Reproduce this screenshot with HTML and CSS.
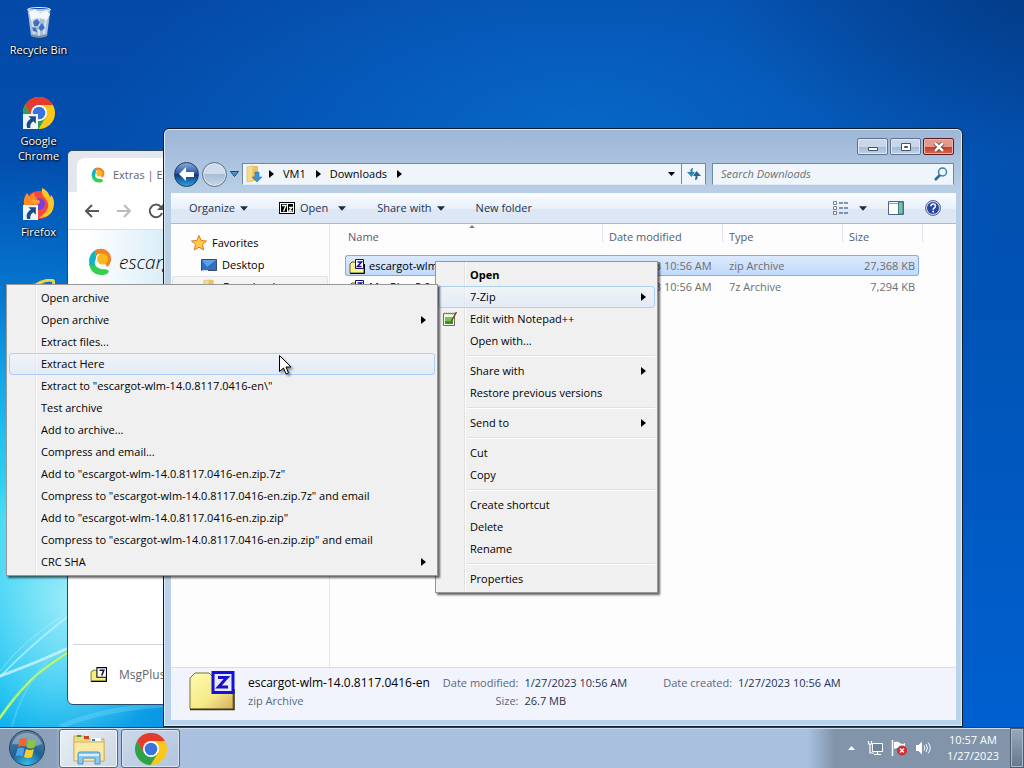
FILE: index.html
```html
<!DOCTYPE html>
<html lang="en">
<head>
  <meta charset="UTF-8">
  <title>Desktop</title>
  <link rel="stylesheet" href="styles.css">
</head>
<body>

  <!-- Shared icons -->
  <svg class="defs" aria-hidden="true">
    <symbol id="chrome" viewBox="0 0 32 32">
      <circle cx="16" cy="16" r="16" fill="#fbc819"/>
      <path d="M2.1 8 A16 16 0 0 0 15.5 32 L23 20 L16 16 L9 19.5 Z" fill="#2da14c"/>
      <path d="M2.1 8 L9.1 20 L12 10 L16 8 L29.9 8 A16 16 0 0 0 2.1 8Z" fill="#e33b2e"/>
      <circle cx="16" cy="16" r="8" fill="#fff"/>
      <circle cx="16" cy="16" r="6.3" fill="#3873e0"/>
    </symbol>
    <symbol id="shortcut" viewBox="0 0 14 14">
      <path d="M0 0h14v14H0z" fill="#eef4fa"/>
      <path d="M5 2h7v7l-2.300-2.300C7.500 8 6.500 10 6.800 13H4C2.500 9.500 4 6.500 7.300 4.300z" fill="#1c4c86"/>
    </symbol>
    <symbol id="escargot" viewBox="0 0 24 28">
      <path d="M10 1Q1 4 1 14q0 4 2 7l8-3q-4-4-3-9 1-3 3-4z" fill="#12b3c4"/>
      <path d="M7 3q5-4 11-1 6 4 5 11-1 4-4 6l-2-4q3-5-1-8-5-3-9 1z" fill="#f08322"/>
      <circle cx="14.500" cy="11" r="5.500" fill="#fbb81c"/>
      <path d="M1 14q1 4 5 4h5q3 0 5 2l5 3q-1 4-7 4Q2 27 1 14z" fill="#35cf4e"/>
      <path d="M8 11q0 7 9 7l2 3q-9 1-12-4-1-3 1-6z" fill="#fff"/>
    </symbol>
    <symbol id="zip-file" viewBox="0 0 16 16">
      <path d="M1 6l2-2h4l1 2h7v9H1z" fill="#fbf68c" stroke="#5a5a28"/>
      <path d="M1 15.500h14.500V6" fill="none" stroke="#000"/>
      <path d="M6.500 1.500h8v9h-8z" fill="#fff" stroke="#101070"/>
      <path d="M8.500 4h4l-4 4.500h4" fill="none" stroke="#1010a0" stroke-width="1.500"/>
    </symbol>
    <symbol id="folder" viewBox="0 0 18 18">
      <path d="M2 2l6-1v15l-6 1z" fill="#f6dd85" stroke="#c9a646" stroke-width=".5"/>
      <path d="M8 1h5v15H8z" fill="#e9c45e"/>
      <path d="M10 7h4v5h3l-5 5-5-5h3z" fill="#3f92d8" stroke="#1d68ad" stroke-width=".5"/>
    </symbol>
    <symbol id="right" viewBox="0 0 5 8"><path d="M0 0l5 4-5 4z"/></symbol>
    <symbol id="down" viewBox="0 0 9 5"><path d="M0 0h9L4.500 5z"/></symbol>
  </svg>

  <main class="desktop">
    <svg class="streaks" viewBox="0 0 164 200" aria-hidden="true">
      <path d="M0 149Q36 136 66 122T120 92" stroke="#d5f6ff" stroke-width="3" opacity=".75"/>
      <path d="M0 150Q30 118 80 80" stroke="#d0f6ff" stroke-width="2" opacity=".6"/>
      <path d="M0 144Q24 112 70 84" stroke="#bdf3ff" stroke-width="1" opacity=".5"/>
      <path d="M-1 192Q14 170 30 154T90 112" stroke="#8fec6a" stroke-width="3"/>
      <path d="M-1 192Q14 170 30 154T90 112" stroke="#e0ffb0" stroke-width="1"/>
      <path d="M12 200Q20 165 50 130" stroke="#8fe4ff" stroke-width="2" opacity=".3"/>
      <path d="M60 200Q100 182 164 178" stroke="#9be9ff" stroke-width="5" opacity=".25"/>
    </svg>

    <div class="shortcuts">
      <a class="shortcut" href="#">
        <svg viewBox="0 0 32 32" aria-hidden="true">
          <path d="M4.500 3L8 30q8 3 16 0l3.500-27z" fill="#b9cbdc" opacity=".9"/>
          <path d="M8 5l3 23M24 5l-3 23M16 5v25" stroke="#e8f1f8" stroke-width="2" opacity=".7"/>
          <path d="M6 6l6-3 5 4 6-3 4 4-3 6-8-2-8 2z" fill="#f4f8fb"/>
          <path d="M10 16l4-3 3 3-2 4h-4zM15 22l4-5 3 5-4 3zM9 21l4 1 1 4-4-1z" fill="#3c72c4"/>
          <ellipse cx="16" cy="3.500" rx="11.500" ry="2" fill="none" stroke="#e3edf5"/>
          <path d="M8 29q8 3 16 0" stroke="#7d8e9e" fill="none" stroke-width="1.500"/>
        </svg>
        <span>Recycle Bin</span>
      </a>
      <a class="shortcut" href="#">
        <svg viewBox="0 0 32 32" aria-hidden="true"><use href="#chrome"/><use href="#shortcut" x="0" y="17" width="15" height="15"/></svg>
        <span>Google Chrome</span>
      </a>
      <a class="shortcut" href="#">
        <svg viewBox="0 0 32 32" aria-hidden="true">
          <circle cx="16" cy="17" r="14" fill="#f5483f"/>
          <path d="M1 17Q0 10 4 5l3 4q2-4 4-4l1 4 5 2-3 6-7 5z" fill="#ff8a22"/>
          <path d="M19 0q-1 6 3 10 6 6 1 14l-7 6q15-1 15-15 0-5-3-8l-1 3Q26 3 19 0z" fill="#ffc62c"/>
          <circle cx="16" cy="16" r="6" fill="#7a3fd6"/>
          <path d="M8 12q8-2 9 2-1 3-6 3z" fill="#ffa02c"/>
          <use href="#shortcut" x="0" y="17" width="15" height="15"/>
        </svg>
        <span>Firefox</span>
      </a>
      <a class="shortcut" href="#">
        <svg viewBox="0 0 32 32" aria-hidden="true">
          <circle cx="16" cy="17" r="11" fill="none" stroke="#2f9fe6" stroke-width="5"/>
          <path d="M3 18Q12 1 29 1q4 2-1 9" fill="none" stroke="#f3d53a" stroke-width="3"/>
        </svg>
        <span>Internet Explorer</span>
      </a>
    </div>

    <!-- Browser window behind the explorer -->
    <section class="browser">
      <div class="tabs">
        <div class="tab"><svg width="14" height="16" aria-hidden="true"><use href="#escargot"/></svg>Extras | Escargot</div>
      </div>
      <div class="browser-bar">
        <button aria-label="Back"><svg width="16" height="16" viewBox="0 0 16 16"><path d="M15 8H2M8 2L2 8l6 6" fill="none" stroke="#54575b" stroke-width="2"/></svg></button>
        <button aria-label="Forward"><svg width="16" height="16" viewBox="0 0 16 16"><path d="M1 8h13M8 2l6 6-6 6" fill="none" stroke="#b9bbbd" stroke-width="2"/></svg></button>
        <button aria-label="Reload"><svg width="16" height="16" viewBox="0 0 16 16"><path d="M13 4a6.300 6.300 0 1 0 1 6" fill="none" stroke="#54575b" stroke-width="2"/><path d="M15 1v6H9z" fill="#54575b"/></svg></button>
      </div>
      <div class="site-header"><svg width="24" height="28" aria-hidden="true"><use href="#escargot"/></svg>escargot</div>
      <div class="site-body"></div>
      <div class="download-bar"><svg width="17" height="17" viewBox="0 0 16 16" aria-hidden="true">
        <path d="M1 6l2-2h4l1 2h7v8H1z" fill="#f7ef7a" stroke="#8a843a"/>
        <path d="M1 14.500h14.500V6" fill="none" stroke="#000"/>
        <path d="M6.500 1.500h9v9h-9z" fill="#fff" stroke="#000"/>
        <path d="M9 4h4l-2 5" fill="none" stroke="#101050" stroke-width="1.500"/>
      </svg>MsgPlus</div>
    </section>

    <!-- Explorer window -->
    <section class="explorer">
      <div class="title-bar">
        <button class="caption" aria-label="Minimize"><svg width="12" height="10" viewBox="0 0 12 10"><path d="M1.500 5.500h9v3h-9z" fill="#fff" stroke="#43536a"/></svg></button>
        <button class="caption" aria-label="Maximize"><svg width="12" height="10" viewBox="0 0 12 10"><path d="M1.500 1.500h9v7h-9z" fill="#fff" stroke="#43536a"/><path d="M4.500 4.500h3v1h-3z" fill="#9fb4cd" stroke="#43536a"/></svg></button>
        <button class="caption close" aria-label="Close"><svg width="12" height="10" viewBox="0 0 12 10"><path d="M2 1l8 8M10 1L2 9" stroke="#5b2a2a" stroke-width="4"/><path d="M2 1l8 8M10 1L2 9" stroke="#fff" stroke-width="2.500"/></svg></button>
      </div>

      <div class="nav-row">
        <button class="round back" aria-label="Back"><svg width="16" height="14" viewBox="0 0 16 14"><path d="M7 0L0 7l7 7v-4h8V5H7z" fill="#fff"/></svg></button>
        <button class="round forward" aria-label="Forward"></button>
        <button class="recent" aria-label="Recent pages"><svg width="9" height="6" viewBox="0 0 9 6"><path d="M.500.500h8l-4 5z" fill="#4a9ac4" stroke="#1f4467"/></svg></button>
        <div class="address">
          <svg width="18" height="18" aria-hidden="true"><use href="#folder"/></svg>
          <svg class="crumb-arrow" aria-hidden="true"><use href="#right"/></svg>
          <button>VM1</button>
          <svg class="crumb-arrow" aria-hidden="true"><use href="#right"/></svg>
          <button>Downloads</button>
          <svg class="crumb-arrow" aria-hidden="true"><use href="#right"/></svg>
          <button class="history" aria-label="Previous locations"><svg width="7" height="4"><use href="#down"/></svg></button>
          <button class="refresh" aria-label="Refresh"><svg width="14" height="14" viewBox="0 0 14 14"><path d="M6 1Q3 1 3.500 5H0l4.500 5L8 5H5.500q0-2 .500-4z" fill="#2e86b4"/><path d="M8 13q3 0 2.500-4H14L9.500 4 6 9h2.500q0 2-.500 4z" fill="#2a6587"/></svg></button>
        </div>
        <div class="search">
          <input type="text" placeholder="Search Downloads" aria-label="Search Downloads">
          <svg width="14" height="14" viewBox="0 0 14 14" aria-hidden="true"><circle cx="8.500" cy="5" r="4" fill="#eaf6fb" stroke="#3a80a8" stroke-width="1.500"/><path d="M6 8l-5 5" stroke="#2b6a94" stroke-width="2.500"/></svg>
        </div>
      </div>

      <div class="toolbar">
        <button>Organize <svg class="drop"><use href="#down"/></svg></button>
        <button class="open"><svg width="16" height="12" viewBox="0 0 16 12"><path d="M0 0h16v12H0z"/><path d="M1 1h14v10H1z" fill="#fff"/><path d="M2 2h6v8H2zM9 2h5v8H9z"/><path d="M3 3.500h4l-2.500 6M10 5.500h3l-3 3.500h3.500" fill="none" stroke="#fff" stroke-width="1.300"/></svg> Open <svg class="drop"><use href="#down"/></svg></button>
        <button>Share with <svg class="drop"><use href="#down"/></svg></button>
        <button>New folder</button>
        <div class="view-tools">
          <button aria-label="Change view"><svg width="16" height="14" viewBox="0 0 16 14"><path d="M.500.500h3v3h-3zM.500 5.500h3v3h-3zM.500 10.500h3v3h-3z" fill="#fff" stroke="#77818f"/><path d="M6 2h10M6 7h10M6 12h10" stroke="#5f7694" stroke-width="1.500" stroke-dasharray="4 1"/></svg><svg class="drop"><use href="#down"/></svg></button>
          <button aria-label="Preview pane"><svg width="16" height="14" viewBox="0 0 16 14"><path d="M.500.500h15v13H.500z" fill="#fff" stroke="#4d6480"/><path d="M1 2.500h9" stroke="#8da3bf"/><path d="M10.500 1h4.500v12h-4.500z" fill="#72c3b4" stroke="#45757c"/></svg></button>
          <button aria-label="Help"><svg width="16" height="16" viewBox="0 0 16 16"><circle cx="8" cy="8" r="7.500" fill="#c7d3ec" stroke="#5a6c9e"/><circle cx="8" cy="8" r="6" fill="#2747a5"/><path d="M5.800 6.300Q6 4 8.200 4q2.300 0 2.200 2 0 1.300-1.200 2Q8.200 8.500 8.200 9.700M8.200 10.800v1.700" fill="none" stroke="#fff" stroke-width="1.600"/></svg></button>
        </div>
      </div>

      <div class="panes">
        <nav class="tree">
          <a href="#" class="tree-item"><svg width="16" height="16" viewBox="0 0 16 16"><path d="M8 .500l2.200 5 5.300.500-4 3.600 1.200 5.400L8 12.200 3.300 15l1.200-5.400L.500 6l5.300-.500z" fill="#ffc845" stroke="#e07a1c"/></svg>Favorites</a>
          <a href="#" class="tree-item child"><svg width="16" height="16" viewBox="0 0 16 16"><path d="M.500 2.500h15v11H.500z" fill="#2d6fc4" stroke="#3d4b5c"/><path d="M1 3h14L6 10z" fill="#5e9fe4"/><path d="M1 13.500h6" stroke="#c8dcf0"/></svg>Desktop</a>
          <a href="#" class="tree-item child hot"><svg width="16" height="16"><use href="#folder"/></svg>Downloads</a>
        </nav>
        <div class="files">
          <svg class="sort" viewBox="0 0 6 3" aria-hidden="true"><path d="M0 3l3-3 3 3z" fill="#6a8099"/></svg>
          <table>
            <colgroup><col><col class="c-date"><col class="c-type"><col class="c-size"></colgroup>
            <thead>
              <tr><th>Name</th><th>Date modified</th><th>Type</th><th>Size</th></tr>
            </thead>
            <tbody>
              <tr class="selected"><td><svg width="16" height="16"><use href="#zip-file"/></svg>escargot-wlm-14.0.8117.0416</td><td>1/27/2023 10:56 AM</td><td>zip Archive</td><td>27,368 KB</td></tr>
              <tr><td><svg width="16" height="16"><use href="#zip-file"/></svg>MsgPlus-5.0</td><td>1/27/2023 10:56 AM</td><td>7z Archive</td><td>7,294 KB</td></tr>
            </tbody>
          </table>
        </div>
      </div>

      <div class="details">
        <svg width="46" height="40" viewBox="0 0 46 40" aria-hidden="true">
          <defs><linearGradient id="fold" x1="0" y1="0" x2="1" y2="1"><stop offset="0" stop-color="#fffcb0"/><stop offset=".6" stop-color="#f5e886"/><stop offset="1" stop-color="#d6ac60"/></linearGradient></defs>
          <path d="M1 38V7l5-5h14l4 4h20v32z" fill="url(#fold)" stroke="#77703a"/>
          <path d="M1 38.500h44V18" fill="none" stroke="#3a3310" stroke-width="1.500"/>
          <path d="M24 1.500h20v20H24z" fill="#e9e9f6" stroke="#1111dd" stroke-width="3"/>
          <path d="M29 6.500h9L29.500 16H39" fill="none" stroke="#1a10c8" stroke-width="3"/>
        </svg>
        <div>
          <div class="file-name">escargot-wlm-14.0.8117.0416-en</div>
          <div class="dim">zip Archive</div>
        </div>
        <dl>
          <dt>Date modified:</dt><dd>1/27/2023 10:56 AM</dd>
          <dt>Size:</dt><dd>26.7 MB</dd>
        </dl>
        <dl class="created">
          <dt>Date created:</dt><dd>1/27/2023 10:56 AM</dd>
        </dl>
      </div>
    </section>

    <!-- Context menu -->
    <div class="menu context-menu">
      <button class="default">Open</button>
      <button class="hot">7-Zip<svg class="more"><use href="#right"/></svg></button>
      <button><svg class="menu-icon" viewBox="0 0 16 16"><path d="M1.500 2.500h11v12h-11z" fill="#f4f8ee" stroke="#66705c"/><path d="M3 6h8v7H3z" fill="#7cc344"/><path d="M3 10h8v3H3z" fill="#3f8f2c"/><path d="M2 2.500h11" stroke="#8b9a80" stroke-width="2" stroke-dasharray="1 1"/><path d="M14.500 1l-5 9" stroke="#6b4a25" stroke-width="1.500"/></svg>Edit with Notepad++</button>
      <button>Open with...</button>
      <hr>
      <button>Share with<svg class="more"><use href="#right"/></svg></button>
      <button>Restore previous versions</button>
      <hr>
      <button>Send to<svg class="more"><use href="#right"/></svg></button>
      <hr>
      <button>Cut</button>
      <button>Copy</button>
      <hr>
      <button>Create shortcut</button>
      <button>Delete</button>
      <button>Rename</button>
      <hr>
      <button>Properties</button>
    </div>

    <!-- 7-Zip submenu -->
    <div class="menu zip-menu">
      <button>Open archive</button>
      <button>Open archive<svg class="more"><use href="#right"/></svg></button>
      <button>Extract files...</button>
      <button class="hot">Extract Here</button>
      <button>Extract to "escargot-wlm-14.0.8117.0416-en\"</button>
      <button>Test archive</button>
      <button>Add to archive...</button>
      <button>Compress and email...</button>
      <button>Add to "escargot-wlm-14.0.8117.0416-en.zip.7z"</button>
      <button>Compress to "escargot-wlm-14.0.8117.0416-en.zip.7z" and email</button>
      <button>Add to "escargot-wlm-14.0.8117.0416-en.zip.zip"</button>
      <button>Compress to "escargot-wlm-14.0.8117.0416-en.zip.zip" and email</button>
      <button>CRC SHA<svg class="more"><use href="#right"/></svg></button>
    </div>

    <svg class="cursor" viewBox="0 0 13 20" aria-hidden="true"><path d="M.500.500v16l4-3.500 2.500 6 2.500-1-2.500-6h5z" fill="#fff" stroke="#000"/></svg>
  </main>

  <footer class="taskbar">
    <button class="start" aria-label="Start">
      <svg width="38" height="38" viewBox="0 0 38 38">
        <defs><radialGradient id="orb" cx=".5" cy="1" r=".95"><stop offset="0" stop-color="#35c6ee"/><stop offset=".5" stop-color="#1c6398"/><stop offset="1" stop-color="#5d7d98"/></radialGradient></defs>
        <circle cx="19" cy="19" r="17.500" fill="url(#orb)" stroke="#27435e"/>
        <path d="M4 15Q8 4 19 4t15 11Q26 19 19 17T4 15z" fill="#c9d9e6" opacity=".45"/>
        <path d="M12 10q4-2 7 0l-2 8q-3-2-7 0z" fill="#f0652c"/>
        <path d="M20.500 10.500q4 2 8 0l-2 8q-4 2-8 0z" fill="#8cc63c"/>
        <path d="M9.500 19.500q4-2 7 0l-2 8q-3-2-7 0z" fill="#4aa3ea"/>
        <path d="M18 20q4 2 8 0l-2 8q-4 2-8 0z" fill="#fcc92f"/>
      </svg>
    </button>
    <button class="task active" aria-label="Windows Explorer">
      <svg width="34" height="32" viewBox="0 0 34 32">
        <path d="M2 3h10l2 3h18v22H2z" fill="#f3da85" stroke="#c9a550"/>
        <path d="M5 2h4v2H5z" fill="#3ca04a"/><path d="M12 3h5v3h-5z" fill="#c5452e"/><path d="M19 5h10v3H19z" fill="#fff"/><path d="M20 6h3v2h-3z" fill="#3b77cc"/>
        <path d="M2 9h30v19H2z" fill="#fae9a4" stroke="#d4b560"/>
        <path d="M6 31V21q0-2 2-2h18q2 0 2 2v10h-5v-6H11v6z" fill="#8bcaf0" stroke="#4a94c8"/>
        <path d="M7 21h20v2H7z" fill="#d5effc"/>
      </svg>
    </button>
    <button class="task" aria-label="Google Chrome"><svg width="32" height="32"><use href="#chrome"/></svg></button>

    <div class="tray">
      <button aria-label="Show hidden icons"><svg width="7" height="4" viewBox="0 0 7 4"><path d="M0 4l3.500-4L7 4z" fill="#fff"/></svg></button>
      <svg class="tray-icon" viewBox="0 0 16 16"><path d="M5.500 3.500h10v8h-10z" fill="#718397" stroke="#fff"/><path d="M7 14.500h7M10.500 12v2M1.500 1v3h3V1M3 4v9h4" fill="none" stroke="#fff" stroke-width="1.200"/></svg>
      <svg class="tray-icon" viewBox="0 0 16 16"><path d="M1.500 0v16" stroke="#fff" stroke-width="1.500"/><path d="M3 2q4-1 6 1t5 0v6q-3 2-5 0T3 9z" fill="#fff"/><circle cx="11" cy="10.500" r="5" fill="#d42a2e"/><path d="M9 8.500l4 4M13 8.500l-4 4" stroke="#fff" stroke-width="1.500"/></svg>
      <svg class="tray-icon" viewBox="0 0 16 16"><path d="M1 5h2.500L7 1.500v13L3.500 11H1z" fill="#fff"/><path d="M9 5.500q2 2.500 0 5M11 4q3 4 0 8M13 2.500q4.500 5.500 0 11" fill="none" stroke="#fff"/></svg>
      <button class="clock">10:57 AM<br>1/27/2023</button>
    </div>
    <button class="show-desktop" aria-label="Show desktop"></button>
  </footer>

</body>
</html>
```
FILE: styles.css
```css
html, body {
  margin: 0;
  padding: 0;
  height: 100%;
}

body {
  display: flex;
  flex-direction: column;
  overflow: hidden;
  font-family: "Open Sans", "Noto Sans", sans-serif;
  font-size: 11px;
  line-height: 16px;
  color: #000;
}

* {
  box-sizing: border-box;
}

button {
  margin: 0;
  padding: 0;
  border: none;
  background: none;
  font: inherit;
  color: inherit;
  text-align: left;
}

a {
  color: inherit;
  text-decoration: none;
}

svg {
  flex: none;
}

.defs {
  position: absolute;
  width: 0;
  height: 0;
}

.desktop {
  position: relative;
  flex: 1;
  min-height: 0;
  background:
    radial-gradient(ellipse 110px 150px at 70px 600px, rgba(170, 240, 250, 0.9), transparent),
    radial-gradient(ellipse 300px 220px at 0 520px, rgba(60, 220, 240, 0.9), rgba(40, 205, 245, 0.5) 50%, transparent),
    radial-gradient(ellipse 420px 440px at 0 600px, #12bdf0 20%, rgba(10, 150, 230, 0.7) 60%, transparent),
    radial-gradient(ellipse 300px 160px at 100% 0, rgba(0, 50, 110, 0.5), transparent),
    radial-gradient(ellipse 480px 240px at 580px 130px, rgba(10, 120, 215, 0.6), transparent),
    linear-gradient(#0549a8, #0053b4 40%, #0060d0);
}

.streaks {
  position: absolute;
  left: 0;
  bottom: 0;
  width: 164px;
  height: 200px;
  fill: none;
}

/* Desktop shortcuts */
.shortcuts {
  position: absolute;
  top: 6px;
  left: 0;
  width: 77px;
  display: grid;
  grid-auto-rows: 91px;
}

.shortcut {
  display: flex;
  flex-direction: column;
  align-items: center;
  gap: 4px;
  padding: 0 12px;
  line-height: 15px;
  color: #fff;
  text-align: center;
  text-shadow: 1px 1px 2px #000, 0 0 2px #000;
}

.shortcut:first-child {
  padding: 0;
}

.shortcut > svg {
  width: 32px;
  height: 32px;
}

/* Browser window */
.browser {
  position: absolute;
  top: 150px;
  left: 67px;
  right: 300px;
  bottom: 22px;
  display: flex;
  flex-direction: column;
  border: 1px solid #2a4a6a;
  border-radius: 6px;
  background: #fff;
  overflow: hidden;
}

.tabs {
  height: 41px;
  padding: 7px 9px 0;
  background: #e3e6ea;
}

.tab {
  display: flex;
  align-items: center;
  gap: 8px;
  width: 240px;
  height: 34px;
  padding-left: 14px;
  border-radius: 8px 8px 0 0;
  background: #fff;
  color: #5f6368;
}

.browser-bar {
  display: flex;
  align-items: center;
  gap: 16px;
  height: 38px;
  padding-left: 16px;
  border-bottom: 1px solid #dcdfe3;
}

.browser-bar button {
  height: 16px;
}

.site-header {
  display: flex;
  align-items: center;
  gap: 7px;
  height: 64px;
  padding-left: 20px;
  background: linear-gradient(90deg, #fff 20px, #d8edf8 100px);
  font-size: 19px;
  font-style: italic;
  font-weight: 300;
}

.site-body {
  flex: 1;
}

.download-bar {
  display: flex;
  align-items: center;
  gap: 12px;
  height: 60px;
  margin: 0 5px;
  padding-left: 17px;
  border-top: 1px solid #d0d3d6;
  font-size: 12px;
  color: #5f6368;
}

/* Explorer window */
.explorer {
  position: absolute;
  top: 128px;
  left: 163px;
  right: 61px;
  bottom: 0;
  display: flex;
  flex-direction: column;
  padding: 0 6px 6px 7px;
  border: 1px solid #10202f;
  border-radius: 6px 6px 0 0;
  background: linear-gradient(#9db6d6, #b9cfe6 64px, #bdd2e9 300px, #b9d3ea);
  box-shadow: inset 0 0 0 1px #dcebf8;
}

.title-bar {
  display: flex;
  justify-content: flex-end;
  gap: 2px;
  height: 30px;
  padding: 9px 2px 0 0;
}

.caption {
  display: flex;
  align-items: center;
  justify-content: center;
  width: 31px;
  height: 17px;
  border: 1px solid #5d738f;
  border-radius: 2px;
  background: linear-gradient(#c8d7e9 50%, #a3b8d0 50%, #bed2e8);
  box-shadow: inset 0 0 0 1px #dde9f5;
}

.caption.close {
  border-color: #5b1c20;
  background: linear-gradient(#e29a8c 50%, #bf3a2a 50%, #d9684e);
  box-shadow: inset 0 0 0 1px #eab5a8;
}

.nav-row {
  display: flex;
  align-items: center;
  height: 34px;
  padding: 0 2px 4px 3px;
}

.round {
  display: flex;
  align-items: center;
  justify-content: center;
  width: 25px;
  height: 25px;
  margin-right: 3px;
  border: 1px solid #5d7088;
  border-radius: 50%;
}

.back {
  border-color: #1c3a66;
  background: linear-gradient(#8aa8d8, #2a5aa8 45%, #0c3580 50%, #2fa3e0);
}

.forward {
  background: linear-gradient(#cfdceb 50%, #a9bed4 50%, #c6d7e8);
  box-shadow: inset 0 0 0 1px #dbe6f1;
}

.recent {
  display: flex;
  width: 12px;
}

.address,
.search {
  display: flex;
  align-items: center;
  height: 22px;
  border: 1px solid #6f88a5;
  border-bottom-color: #dfeaf5;
  background: #f0f5fb;
}

.address {
  flex: 1;
  margin-right: 6px;
  padding-left: 2px;
}

.crumb-arrow {
  width: 5px;
  height: 8px;
  margin: 0 9px 0 6px;
}

.address button + .crumb-arrow {
  margin-left: 10px;
}

.address .history {
  display: flex;
  justify-content: center;
  width: 20px;
  margin-left: auto;
}

.address .refresh {
  display: flex;
  align-items: center;
  justify-content: center;
  width: 24px;
  height: 20px;
  border-left: 1px solid #6f88a5;
}

.search {
  width: 242px;
  padding: 0 5px 0 8px;
}

.search input {
  flex: 1;
  min-width: 0;
  padding: 0;
  border: none;
  outline: none;
  background: none;
  font: inherit;
}

.search input::placeholder {
  color: #6a7076;
  font-style: italic;
}

.toolbar {
  display: flex;
  align-items: center;
  gap: 31px;
  height: 31px;
  padding: 0 15px 1px 18px;
  border-top: 1px solid #f4f9ff;
  border-bottom: 1px solid #a9bbd2;
  background: linear-gradient(#fafcff, #e8f0fa 50%, #dce6f4 52%, #dfe9f6);
  color: #1e3250;
}

.toolbar button {
  display: flex;
  align-items: center;
  gap: 5px;
}

.drop {
  width: 8px;
  height: 5px;
  fill: #1e2c40;
}

.open .drop {
  margin-left: 5px;
}

.view-tools {
  display: flex;
  gap: 21px;
  margin-left: auto;
}

.view-tools button {
  gap: 10px;
}

.panes {
  display: flex;
  flex: 1;
  min-height: 0;
  background: #fdfdfe;
}

.tree {
  width: 159px;
  padding-top: 8px;
  border-right: 1px solid #dde6f2;
}

.tree-item {
  display: flex;
  align-items: center;
  gap: 5px;
  height: 22px;
  padding-left: 20px;
}

.tree-item.child {
  padding-left: 30px;
}

.tree-item.hot {
  margin: 0 1px;
  padding-left: 29px;
  border: 1px solid #e3e3e3;
  border-radius: 2px;
  background: #f4f4f4;
}

.files {
  position: relative;
  flex: 1;
  padding-left: 15px;
}

.sort {
  position: absolute;
  top: 1px;
  left: 139px;
  width: 6px;
  height: 3px;
}

table {
  width: 574px;
  table-layout: fixed;
  border-spacing: 0;
}

.c-date, .c-type {
  width: 120px;
}

.c-size {
  width: 76px;
}

th {
  position: relative;
  height: 31px;
  padding: 0 0 6px 6px;
  color: #51606f;
  font-weight: normal;
  text-align: left;
}

th:first-child {
  padding-left: 3px;
}

/* column dividers */
th::after {
  content: "";
  position: absolute;
  top: 0;
  right: 0;
  width: 1px;
  height: 18px;
  background: #dfe6ef;
}

th:last-child::after {
  right: -4px;
}

td {
  height: 21px;
  padding: 0 0 0 6px;
  border: 1px solid transparent;
  border-width: 1px 0;
  color: #6d6d6d;
  white-space: nowrap;
}

td:first-child {
  padding-left: 3px;
  border-left-width: 1px;
  color: #000;
}

td:last-child {
  padding: 0 3px 0 0;
  border-right-width: 1px;
  text-align: right;
}

td svg {
  margin-right: 4px;
  vertical-align: top;
}

.selected td {
  border-color: #84acdd;
  background: linear-gradient(#dce9fb, #c1dafc);
}

.selected td:first-child {
  border-radius: 3px 0 0 3px;
}

.selected td:last-child {
  border-radius: 0 3px 3px 0;
}

.details {
  display: flex;
  height: 53px;
  padding: 3px 0 0 18px;
  border-top: 1px solid #d5deeb;
  background: #f1f4fc;
  line-height: 18px;
  color: #1e3250;
}

.details > svg {
  margin-right: 13px;
}

.details > div {
  padding-top: 3px;
}

.file-name {
  font-size: 12px;
  color: #000;
}

.dim, .details dt {
  color: #5a6779;
}

.details dl {
  display: grid;
  grid-template-columns: auto auto;
  align-content: start;
  column-gap: 6px;
  margin: 0 0 0 13px;
  padding-top: 3px;
}

.details dl.created {
  margin-left: 36px;
}

.details dt {
  text-align: right;
}

.details dd {
  margin: 0;
}

/* Menus */
.menu {
  position: absolute;
  display: flex;
  flex-direction: column;
  padding: 2px;
  border: 1px solid #979797;
  background: linear-gradient(90deg, #f1f1f1 28px, #e0e0e0 28px, #e0e0e0 29px, #fff 29px, #fff 30px, #f0f0f0 30px);
  box-shadow: 2px 2px 2px rgba(0, 0, 0, 0.6);
}

.context-menu {
  top: 261px;
  left: 435px;
  width: 223px;
}

.zip-menu {
  top: 284px;
  left: 6px;
  width: 432px;
}

.menu button {
  position: relative;
  height: 22px;
  padding-left: 32px;
  white-space: nowrap;
}

.menu button.default {
  font-weight: bold;
}

.menu button.hot {
  padding-left: 31px;
  border: 1px solid #aecff7;
  border-radius: 3px;
  background: linear-gradient(rgba(240, 246, 253, 0.6), rgba(218, 231, 247, 0.6));
}

.menu hr {
  width: calc(100% - 29px);
  height: 2px;
  margin: 3px 0 3px auto;
  border: none;
  border-top: 1px solid #e0e0e0;
  border-bottom: 1px solid #fff;
}

.more {
  position: absolute;
  top: 7px;
  right: 9px;
  width: 5px;
  height: 8px;
}

.hot .more {
  top: 6px;
  right: 8px;
}

.menu-icon {
  position: absolute;
  top: 3px;
  left: 4px;
  width: 16px;
  height: 16px;
}

.cursor {
  position: absolute;
  top: 355px;
  left: 279px;
  width: 13px;
  height: 20px;
  filter: drop-shadow(2px 2px 1px rgba(0, 0, 0, 0.4));
}

/* Taskbar */
.taskbar {
  display: flex;
  align-items: stretch;
  height: 41px;
  border-top: 1px solid #2d4258;
  background: linear-gradient(90deg, #8799b2, #8fa2bb 56px, #a9c1de 64px, #a9c1de calc(100% - 216px), #8294aa calc(100% - 190px));
  box-shadow: inset 0 1px 0 #c9dcf0;
}

.start {
  display: flex;
  align-items: center;
  width: 59px;
  padding-left: 8px;
}

.task {
  display: flex;
  align-items: center;
  justify-content: center;
  width: 59px;
  margin: 1px 3px 0 0;
  border: 1px solid #4f6785;
  border-radius: 3px;
  background: linear-gradient(135deg, #cbd8e8, #b1c5df);
  box-shadow: inset 0 0 0 1px #d8e4f1;
}

.task.active {
  background: linear-gradient(135deg, #e8eef5, #cdd7e3);
  box-shadow: inset 0 0 0 1px #f4f8fc;
}

.tray {
  display: flex;
  align-items: center;
  gap: 8px;
  margin-left: auto;
  padding-right: 11px;
  color: #fff;
}

.tray button {
  display: flex;
}

.tray > button:first-child {
  margin-right: 4px;
}

.tray-icon {
  width: 16px;
  height: 16px;
}

.tray .clock {
  display: block;
  margin-left: 8px;
  text-align: center;
}

.show-desktop {
  width: 14px;
  border: 1px solid #4b5b70;
  background: linear-gradient(#9aa8ba, #66778d);
  box-shadow: inset 0 0 0 1px #aab8c9;
}
```
